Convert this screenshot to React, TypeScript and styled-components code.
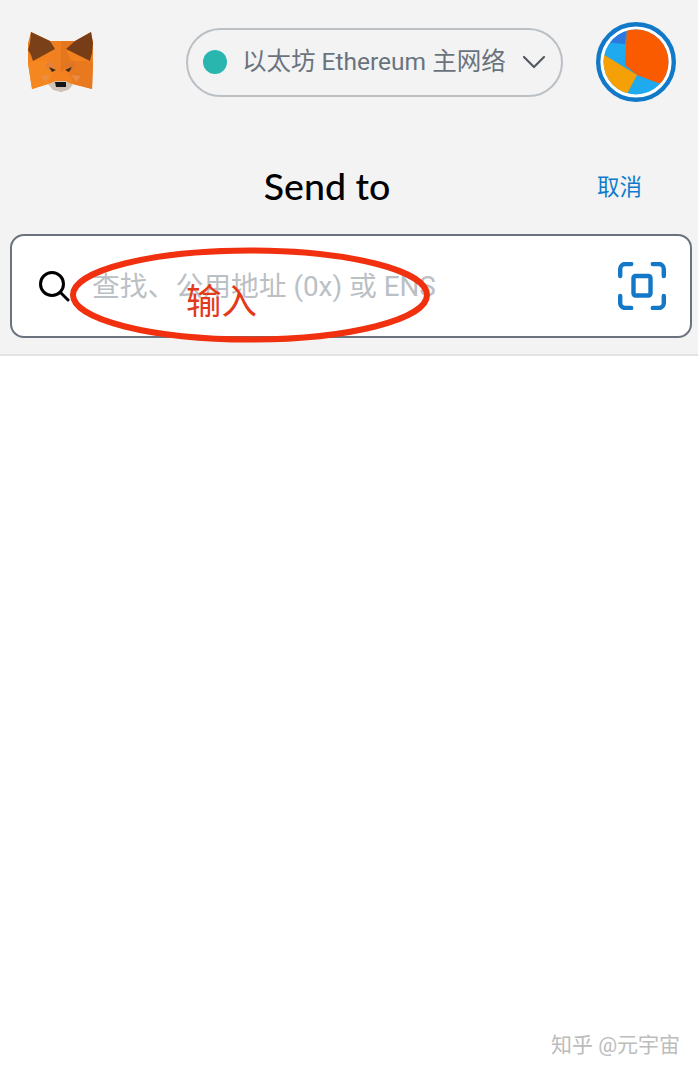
import styled, {createGlobalStyle} from 'styled-components';

const GlobalStyle = createGlobalStyle`
  html, body {
    margin: 0;
    background: #fff;
    font-family: Roboto, "Noto Sans CJK SC", sans-serif;
  }
`;

const Page = styled.div`
  position: relative;
  width: 698px;
  height: 1074px;
  overflow: hidden;
  background: #fff;
`;

const Header = styled.header`
  box-sizing: border-box;
  height: 356px;
  padding-top: 22px;
  background: #f3f3f4;
  border-bottom: 2px solid #e1e2e3;
`;

const TopBar = styled.div`
  display: flex;
  align-items: center;
  height: 80px;
  padding: 0 22px 0 28px;
`;

const Fox = styled.svg`
  width: 66px;
  height: 62px;
  flex: none;
`;

const NetworkPill = styled.button`
  box-sizing: border-box;
  display: flex;
  align-items: center;
  width: 378px;
  height: 69px;
  margin-left: 92px;
  padding: 0 15px;
  background: #f3f3f4;
  border: 2px solid #bbc0c5;
  border-radius: 35px;
  color: #6a737d;
  font-family: inherit;
  font-size: 24.5px;
`;

const NetworkDot = styled.span`
  width: 24px;
  height: 24px;
  margin-right: 15px;
  flex: none;
  border-radius: 50%;
  background: #29b6af;
`;

const NetworkName = styled.span`
  margin-top: -5px;
  white-space: nowrap;
`;

const Caret = styled.svg`
  width: 24px;
  height: 16px;
  margin-left: auto;
  flex: none;
`;

const Avatar = styled.svg`
  width: 80px;
  height: 80px;
  margin-left: 33px;
  flex: none;
`;

const TitleRow = styled.div`
  display: grid;
  grid-template-columns: 1fr auto 1fr;
  align-items: center;
  height: 44px;
  margin-top: 62px;
  padding: 0 56px 0 12px;
`;

const Title = styled.h1`
  grid-column: 2;
  margin: 0;
  color: #000;
  font-family: Lato, "Noto Sans CJK SC", sans-serif;
  font-size: 37.5px;
  font-weight: 500;
  line-height: 44px;
`;

const Cancel = styled.span`
  justify-self: end;
  padding-bottom: 2px;
  color: #0f7ccb;
  font-size: 22.5px;
`;

const SearchBox = styled.div`
  position: relative;
  box-sizing: border-box;
  display: flex;
  align-items: center;
  width: 682px;
  height: 104px;
  margin: 26px 0 0 10px;
  padding: 0 24px 0 26px;
  background: #fff;
  border: 2px solid #6a737d;
  border-radius: 14px;
`;

const SearchIcon = styled.svg`
  width: 32px;
  height: 32px;
  flex: none;
`;

const Placeholder = styled.span`
  margin: -4px 0 0 22px;
  color: #bbc0c5;
  font-size: 27.8px;
  white-space: nowrap;
`;

const ScanIcon = styled.svg`
  width: 48px;
  height: 48px;
  margin-left: auto;
  flex: none;
`;

const AnnotationRing = styled.svg`
  position: absolute;
  left: 56px;
  top: 10px;
  width: 366px;
  height: 100px;
  overflow: visible;
`;

const AnnotationText = styled.span`
  position: absolute;
  left: 174px;
  top: 40px;
  color: #e33a1b;
  font-family: "Noto Sans CJK SC", sans-serif;
  font-size: 35.5px;
  line-height: 46px;
`;

const Watermark = styled.span`
  position: absolute;
  right: 18px;
  bottom: 16px;
  color: #bcbcbc;
  font-size: 21px;
  line-height: 26px;
  white-space: nowrap;
`;

const App = () => {
  return (
    <Page>
      <GlobalStyle/>
      <Header>
        <TopBar>
          <Fox viewBox="0 0 66 62">
            <polygon points="3,1 22,10 47,10 63,1 65,12 65,32 64,58 44,53 33,61 20,53 4,58 0,32 0,12" fill="#f3811f"/>
            <polygon points="22,10 33,10 33,42 23,30 27,18" fill="#ef7f20"/>
            <polygon points="47,10 33,10 33,42 43,30 38,18" fill="#e4761d"/>
            <polygon points="3,1 22,10 27,18 5,30 3,24 0,19 2,12" fill="#7a4119"/>
            <polygon points="63,1 47,10 38,18 62,30 64,22 65,12" fill="#763d17"/>
            <polygon points="0,32 5,30 23,30 25,42 20,53 4,58" fill="#f58720"/>
            <polygon points="65,32 62,30 43,30 41,42 46,53 64,58" fill="#e9791e"/>
            <polygon points="12,45 22,44 18,51" fill="#e8914f" opacity="0.75"/>
            <polygon points="53,45 43,44 48,51" fill="#e8914f" opacity="0.75"/>
            <polygon points="20,30 28,34 25,42 17,36" fill="#e58233"/>
            <polygon points="45,30 37,34 40,42 48,36" fill="#dd7526"/>
            <polygon points="20,53 28,50 38,50 45,54 40,59 33,61 25,59" fill="#cfc3b8"/>
            <polygon points="27,51 38,51 38,56 28,56" fill="#161616"/>
            <polygon points="21,36 28,39 24,41" fill="#3b2a1d"/>
            <polygon points="44,36 37,39 41,41" fill="#3b2a1d"/>
          </Fox>
          <NetworkPill>
            <NetworkDot/>
            <NetworkName>以太坊 Ethereum 主网络</NetworkName>
            <Caret viewBox="0 0 24 16" fill="none" stroke="#535a61" strokeWidth="2.2" strokeLinecap="round" strokeLinejoin="round">
              <path d="M2 3l10 10L22 3"/>
            </Caret>
          </NetworkPill>
          <Avatar viewBox="0 0 80 80">
            <defs>
              <clipPath id="avatarClip"><circle cx="40" cy="40" r="32.5"/></clipPath>
            </defs>
            <circle cx="40" cy="40" r="37.8" fill="#fff" stroke="#1279c9" strokeWidth="4.4"/>
            <g clipPath="url(#avatarClip)">
              <rect width="80" height="80" fill="#1fa9ee"/>
              <polygon points="31,6 8,20 29,22" fill="#2a78e0"/>
              <polygon points="31,4 29,43 41,53 62,61 80,61 80,0" fill="#fa5a00"/>
              <polygon points="5,31 41,53 31,72 0,72" fill="#f4a006"/>
            </g>
          </Avatar>
        </TopBar>
        <TitleRow>
          <Title>Send to</Title>
          <Cancel>取消</Cancel>
        </TitleRow>
        <SearchBox>
          <SearchIcon viewBox="0 0 32 32" fill="none" stroke="#000" strokeWidth="3" strokeLinecap="round">
            <circle cx="14" cy="14" r="11.5"/>
            <path d="M22.5 22.5L30 30"/>
          </SearchIcon>
          <Placeholder>查找、公用地址 (0x) 或 ENS</Placeholder>
          <ScanIcon viewBox="0 0 48 48" fill="none" stroke="#1478c8" strokeWidth="4.4" strokeLinecap="round">
            <path d="M2.2 14V7a5 5 0 0 1 5-5h6"/>
            <path d="M34.800 2h6a5 5 0 0 1 5 5v7"/>
            <path d="M2.200 34v7a5 5 0 0 0 5 5h6"/>
            <path d="M34.800 46h6a5 5 0 0 0 5-5v-7"/>
            <rect x="15.500" y="14" width="17" height="19.500" rx="2"/>
          </ScanIcon>
          <AnnotationRing viewBox="0 0 366 100">
            <ellipse cx="182" cy="49" rx="177" ry="44.500" fill="none" stroke="#f0300f" strokeWidth="6"/>
          </AnnotationRing>
          <AnnotationText>输入</AnnotationText>
        </SearchBox>
      </Header>
      <Watermark>知乎 @元宇宙</Watermark>
    </Page>
  );
};

export default App;
